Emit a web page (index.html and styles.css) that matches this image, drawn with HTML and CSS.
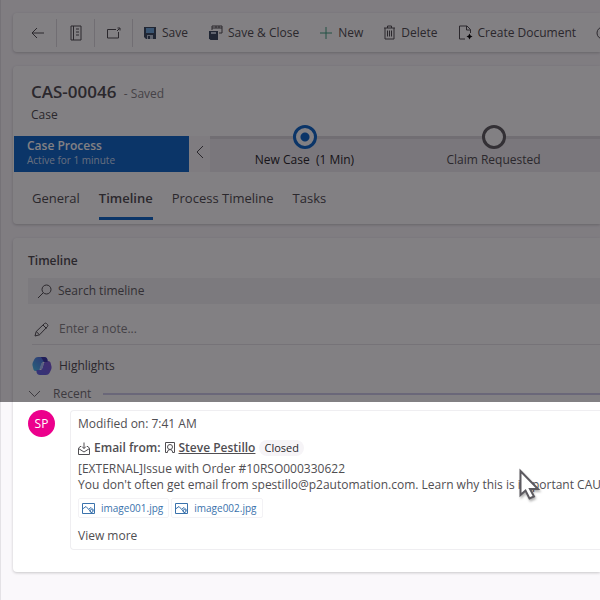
FILE: index.html
```html
<!DOCTYPE html>
<html lang="en">
<head>
    <meta charset="UTF-8">
    <meta name="viewport" content="width=device-width, initial-scale=1.0">
    <title>CAS-00046 - Case</title>
    <link rel="stylesheet" href="styles.css">
</head>
<body>
    <main class="page">
        <!-- Command bar -->
        <nav class="card toolbar" aria-label="Commands">
            <button class="icon-btn" aria-label="Back">
                <svg width="14" height="14" viewBox="0 0 14 14"><path d="M13 7H1M6 2L1 7l5 5"/></svg>
            </button>
            <button class="icon-btn" aria-label="Open record set">
                <svg width="14" height="16" viewBox="0 0 14 16"><path d="M2 1h10v14H2zM4.500 1v14M7 4h3M7 7h3M7 10h3"/></svg>
            </button>
            <button class="icon-btn" aria-label="Open in new window">
                <svg width="16" height="14" viewBox="0 0 16 14"><path d="M10 3.500H1.500v8.500h11V6M11 5l2.500-2.500M11.500 2h2.500v2.500"/></svg>
            </button>
            <button class="command">
                <svg class="save-icon" width="14" height="14" viewBox="0 0 14 14"><path class="disk" d="M1 1h12v12H3l-2-2z"/><path class="label" d="M3 2h8v5H3z"/><path class="slot" d="M4 9h6v4H4z"/><path class="disk" d="M5 10h2v3H5z"/></svg>
                Save
            </button>
            <button class="command">
                <svg class="save-icon" width="15" height="15" viewBox="0 0 15 15"><path class="disk" d="M1 6h9v9H2.500L1 13.500z"/><path class="slot" d="M3 7h5v2H3z"/><path d="M4 5V1h10v7h-3M4 3h10M8 1v2M11 1v2"/></svg>
                Save &amp; Close
            </button>
            <button class="command">
                <svg class="plus-icon" width="14" height="14" viewBox="0 0 14 14"><path d="M7 1v12M1 7h12"/></svg>
                New
            </button>
            <button class="command">
                <svg width="13" height="15" viewBox="0 0 13 15"><path d="M1 3h11M4.500 3V1h4v2M2 3v11h9V3M4.500 5.500v6M6.500 5.500v6M8.500 5.500v6"/></svg>
                Delete
            </button>
            <button class="command">
                <svg width="15" height="15" viewBox="0 0 15 15"><path d="M7 14H1.500V1H9l3.500 3.500V8M8.500 1v4h4"/><path class="spark" d="M11.500 8.500l1 2 2 1-2 1-1 2-1-2-2-1 2-1z"/></svg>
                Create Document
            </button>
            <button class="command" aria-label="Refresh">
                <svg width="14" height="14" viewBox="0 0 14 14"><circle cx="7" cy="7" r="6"/></svg>
            </button>
        </nav>

        <!-- Record header -->
        <header class="card record">
            <div class="record-title">
                <h1>CAS-00046 <small>- Saved</small></h1>
                <p>Case</p>
            </div>
            <div class="process">
                <div class="process-name">
                    <strong>Case Process</strong>
                    <span>Active for 1 minute</span>
                </div>
                <button class="process-prev" aria-label="Previous stage">
                    <svg width="8" height="14" viewBox="0 0 8 14"><path d="M7 1L1 7l6 6"/></svg>
                </button>
                <ol class="stages">
                    <li class="stage active"><i class="dot"></i>New Case &nbsp;(1 Min)</li>
                    <li class="stage"><i class="dot"></i>Claim Requested</li>
                </ol>
            </div>
            <nav class="tabs" aria-label="Form tabs">
                <a href="#general">General</a>
                <a href="#timeline" class="selected">Timeline</a>
                <a href="#process">Process Timeline</a>
                <a href="#tasks">Tasks</a>
            </nav>
        </header>

        <!-- Timeline -->
        <section class="card timeline" id="timeline">
            <h2>Timeline</h2>
            <label class="search">
                <svg width="15" height="15" viewBox="0 0 15 15"><circle cx="9.500" cy="5.500" r="4.500"/><path d="M6.300 8.700L1 14"/></svg>
                <input type="text" placeholder="Search timeline" aria-label="Search timeline">
            </label>
            <label class="note">
                <svg width="15" height="15" viewBox="0 0 15 15"><path d="M1 14l1.200-4.500L10.500 1.500q1-.8 2 0l1 1q.8 1 0 2L5.500 12.800zM9 3l3.500 3.500M2.200 9.500l3.300 3.300"/></svg>
                <input type="text" placeholder="Enter a note..." aria-label="Enter a note">
            </label>
            <div class="highlights">
                <svg width="20" height="20" viewBox="0 0 20 20">
                    <defs>
                        <linearGradient id="cp-left" x1="0" y1="1" x2="1" y2="0"><stop offset="0" stop-color="#48c4f0"/><stop offset="1" stop-color="#5a60e0"/></linearGradient>
                        <linearGradient id="cp-right" x1="0" y1="1" x2="1" y2="0"><stop offset="0" stop-color="#6068e8"/><stop offset="1" stop-color="#8058d8"/></linearGradient>
                    </defs>
                    <g stroke="none">
                        <path fill="url(#cp-left)" d="M6 1h6q3 0 3.500 3v2H12q-2 0-2.500 2L8 13q-.6 2-2.500 2H4q-2 0-2.500-1.500L.5 9.500q-.3-1.500.3-3L2.500 3q1-2 3.500-2z"/>
                        <path fill="url(#cp-right)" d="M14 19H8q-3 0-3.500-3v-2H8q2 0 2.500-2L12 7q.6-2 2.500-2H16q2 0 2.500 1.500l1 4q.3 1.500-.3 3L17.500 17q-1 2-3.500 2z"/>
                        <path fill="#3a38a8" d="M9 1h3q3 0 3.500 3v2H12z"/>
                        <path fill="#a8c0ff" d="M9.500 7H12l-2 6H7.500z"/>
                    </g>
                </svg>
                Highlights
            </div>
            <div class="recent">
                <svg width="13" height="8" viewBox="0 0 13 8"><path d="M1 1l5.500 5.500L12 1"/></svg>
                <span>Recent</span>
            </div>

            <div class="entry">
                <div class="avatar">SP</div>
                <article class="message">
                    <p class="modified">Modified on: 7:41 AM</p>
                    <div class="sender">
                        <svg width="12" height="13" viewBox="0 0 12 13"><path d="M3 4.500H2L.5 6.500v6h11v-6L10 4.500H9M.5 6.500L6 10l5.500-3.500M6 .500v6M4 4.500l2 2 2-2"/></svg>
                        <b>Email from:</b>
                        <svg width="10" height="12" viewBox="0 0 10 12"><path d="M2 10.500H.5V.500h9v10H8M2 11q.5-3.500 3-3.500T8 11"/><circle cx="5" cy="5" r="2.500"/></svg>
                        <a href="#contact">Steve Pestillo</a>
                        <span class="status">Closed</span>
                    </div>
                    <div class="preview">
                        <p>[EXTERNAL]Issue with Order #10RSO000330622</p>
                        <p>You don't often get email from spestillo@p2automation.com. Learn why this is important CAUTION:</p>
                    </div>
                    <div class="files">
                        <a href="#image001">
                            <svg width="13" height="11" viewBox="0 0 13 11"><path d="M.5.500h12v10H.5zM.5 6L4 3.500l6 6.500M7 6l2-1.500L12.500 8"/><circle cx="9.500" cy="8" r="1.500"/></svg>
                            image001.jpg
                        </a>
                        <a href="#image002">
                            <svg width="13" height="11" viewBox="0 0 13 11"><path d="M.5.500h12v10H.5zM.5 6L4 3.500l6 6.500M7 6l2-1.500L12.500 8"/><circle cx="9.500" cy="8" r="1.500"/></svg>
                            image002.jpg
                        </a>
                    </div>
                    <button class="more">View more</button>
                </article>
            </div>
        </section>
    </main>

    <!-- Dims everything above the highlighted entry -->
    <div class="shade"></div>

    <svg class="cursor" width="24" height="34" viewBox="0 0 24 34"><path d="M2.500 3v24l5-4.500 4 8 4.500-2-4-7.500h8z"/></svg>
</body>
</html>
```

FILE: styles.css
```css
/* General Reset */
* {
    margin: 0;
    padding: 0;
    box-sizing: border-box;
}

body {
    font-family: "Open Sans", "Noto Sans", sans-serif;
    font-size: 12px;
    line-height: 18px;
    color: #504e52;
    background-color: #faf8fb;
    min-height: 100vh;
    overflow: hidden;
}

button, input {
    font: inherit;
    color: inherit;
    background: none;
    border: none;
}

a {
    color: inherit;
    text-decoration: none;
}

svg {
    flex: none;
    fill: none;
    stroke: currentColor;
    stroke-width: 1;
}

.page {
    display: flex;
    flex-direction: column;
    gap: 14px;
    min-height: 100vh;
    padding: 13px 0 28px 12px;
    border-left: 1px solid #e4e2e6;
}

.card {
    background-color: #ffffff;
    border-radius: 4px 0 0 4px;
    box-shadow: 0 1px 3px rgba(0, 0, 0, 0.2);
}

/* Command bar */
.toolbar {
    display: flex;
    align-items: center;
    height: 39px;
    padding-left: 6px;
    overflow: hidden;
}

.toolbar button {
    display: flex;
    flex: none;
    align-items: center;
    white-space: nowrap;
}

.icon-btn {
    justify-content: center;
    width: 38px;
    height: 28px;
    border-right: 1px solid #dddbdf;
}

.command {
    gap: 5px;
    padding: 0 10px;
}

.save-icon .disk {
    fill: #3a4a60;
    stroke: none;
}

.save-icon .label {
    fill: #6fa8dc;
    stroke: none;
}

.save-icon .slot {
    fill: #b8c4d4;
    stroke: none;
}

.plus-icon {
    color: #3fa080;
}

.spark {
    fill: #000000;
    stroke: none;
}

/* Record header */
.record-title {
    height: 70px;
    padding: 14px 18px 0;
}

.record-title h1 {
    font-size: 17px;
    line-height: 24px;
    font-weight: 600;
}

.record-title small {
    margin-left: 3px;
    font-size: 12px;
    font-weight: 400;
    color: #858386;
}

.process {
    display: flex;
    height: 36px;
    margin-left: 1px;
}

.process-name {
    display: flex;
    flex-direction: column;
    flex: 0 0 175px;
    padding: 3px 13px;
    line-height: 14px;
    color: #ffffff;
    background-color: #1068c8;
}

.process-name strong {
    font-weight: 600;
}

.process-name span {
    font-size: 10px;
    color: #c8dcf4;
}

.process-prev {
    flex: 0 0 21px;
    background-color: #f8f7f9;
}

.stages {
    display: flex;
    flex: 1;
    list-style: none;
    background-color: #efedf0;
    border-top: 3px solid #dcdade;
}

.stage {
    display: flex;
    flex-direction: column;
    align-items: center;
    flex: 0 0 189px;
    white-space: nowrap;
}

.dot {
    width: 24px;
    height: 24px;
    margin-top: -14px;
    margin-bottom: 2px;
    border: 3px solid #605e62;
    border-radius: 50%;
    background-color: #ffffff;
}

.stage.active {
    font-weight: 500;
    color: #2a282c;
}

.stage.active .dot {
    border-color: #1068c8;
    background: radial-gradient(circle, #1068c8 4px, #ffffff 5px);
}

.tabs {
    display: flex;
    gap: 19px;
    height: 52px;
    padding: 12px 19px 0;
    font-size: 13px;
    line-height: 28px;
}

.tabs a {
    height: 36px;
}

.tabs .selected {
    font-weight: 600;
    border-bottom: 3px solid #1068c8;
}

/* Timeline */
.timeline {
    padding: 14px 0 22px 15px;
}

.timeline h2 {
    margin-bottom: 8px;
    font-size: 12px;
    font-weight: 600;
}

.search, .note {
    display: flex;
    align-items: center;
}

.search {
    gap: 6px;
    height: 26px;
    padding-left: 9px;
    background-color: #f3f2f4;
}

.note {
    gap: 10px;
    height: 41px;
    margin-left: 4px;
    padding: 10px 0 0 2px;
    border-bottom: 1px solid #e6e4e8;
}

.search input, .note input {
    flex: 1;
    min-width: 0;
}

.search input::placeholder {
    color: #605e62;
    opacity: 1;
}

.note input::placeholder {
    color: #858386;
    opacity: 1;
}

.highlights {
    display: flex;
    align-items: center;
    gap: 7px;
    height: 42px;
    padding-left: 4px;
}

.recent {
    display: flex;
    align-items: center;
    gap: 12px;
    height: 14px;
    color: #747276;
}

.recent::after {
    content: "";
    flex: 1;
    height: 2px;
    background-color: #cfcdea;
}

/* Timeline entry */
.entry {
    display: flex;
    gap: 15px;
    margin-top: 9px;
}

.avatar {
    flex: none;
    width: 27px;
    height: 27px;
    border-radius: 50%;
    line-height: 27px;
    text-align: center;
    color: #ffffff;
    background-color: #ec008c;
}

.message {
    flex: 1;
    min-width: 0;
    padding: 4px 0 4px 7px;
    border: 1px solid #efeef1;
    border-right: none;
    border-radius: 4px 0 0 4px;
    white-space: nowrap;
    overflow: hidden;
}

.sender {
    display: flex;
    align-items: center;
    gap: 4px;
    margin: 6px 0 4px;
}

.sender b, .sender a {
    font-weight: 600;
}

.sender a {
    text-decoration: underline;
}

.status {
    padding: 0 5px;
    border-radius: 8px;
    font-size: 11px;
    line-height: 16px;
    font-weight: 500;
    color: #2a282c;
    background-color: #f6f4f7;
}

.preview {
    line-height: 16px;
}

.files {
    display: flex;
    gap: 2px;
    margin: 5px 0 9px;
}

.files a {
    display: flex;
    align-items: center;
    gap: 6px;
    height: 20px;
    padding: 0 5px 0 3px;
    border: 1px solid #f3f2f5;
    border-radius: 2px;
    font-size: 10px;
    color: #3a72ac;
}

.more {
    display: block;
}

/* Overlay and pointer */
.shade {
    position: fixed;
    top: 0;
    left: 0;
    right: 0;
    height: 402px;
    background-color: rgba(5, 1, 7, 0.5);
}

.cursor {
    position: absolute;
    top: 468px;
    left: 518px;
    fill: #ffffff;
    stroke: #5c5a60;
    stroke-width: 2;
    filter: drop-shadow(1px 2px 1px rgba(0, 0, 0, 0.3));
}
```
